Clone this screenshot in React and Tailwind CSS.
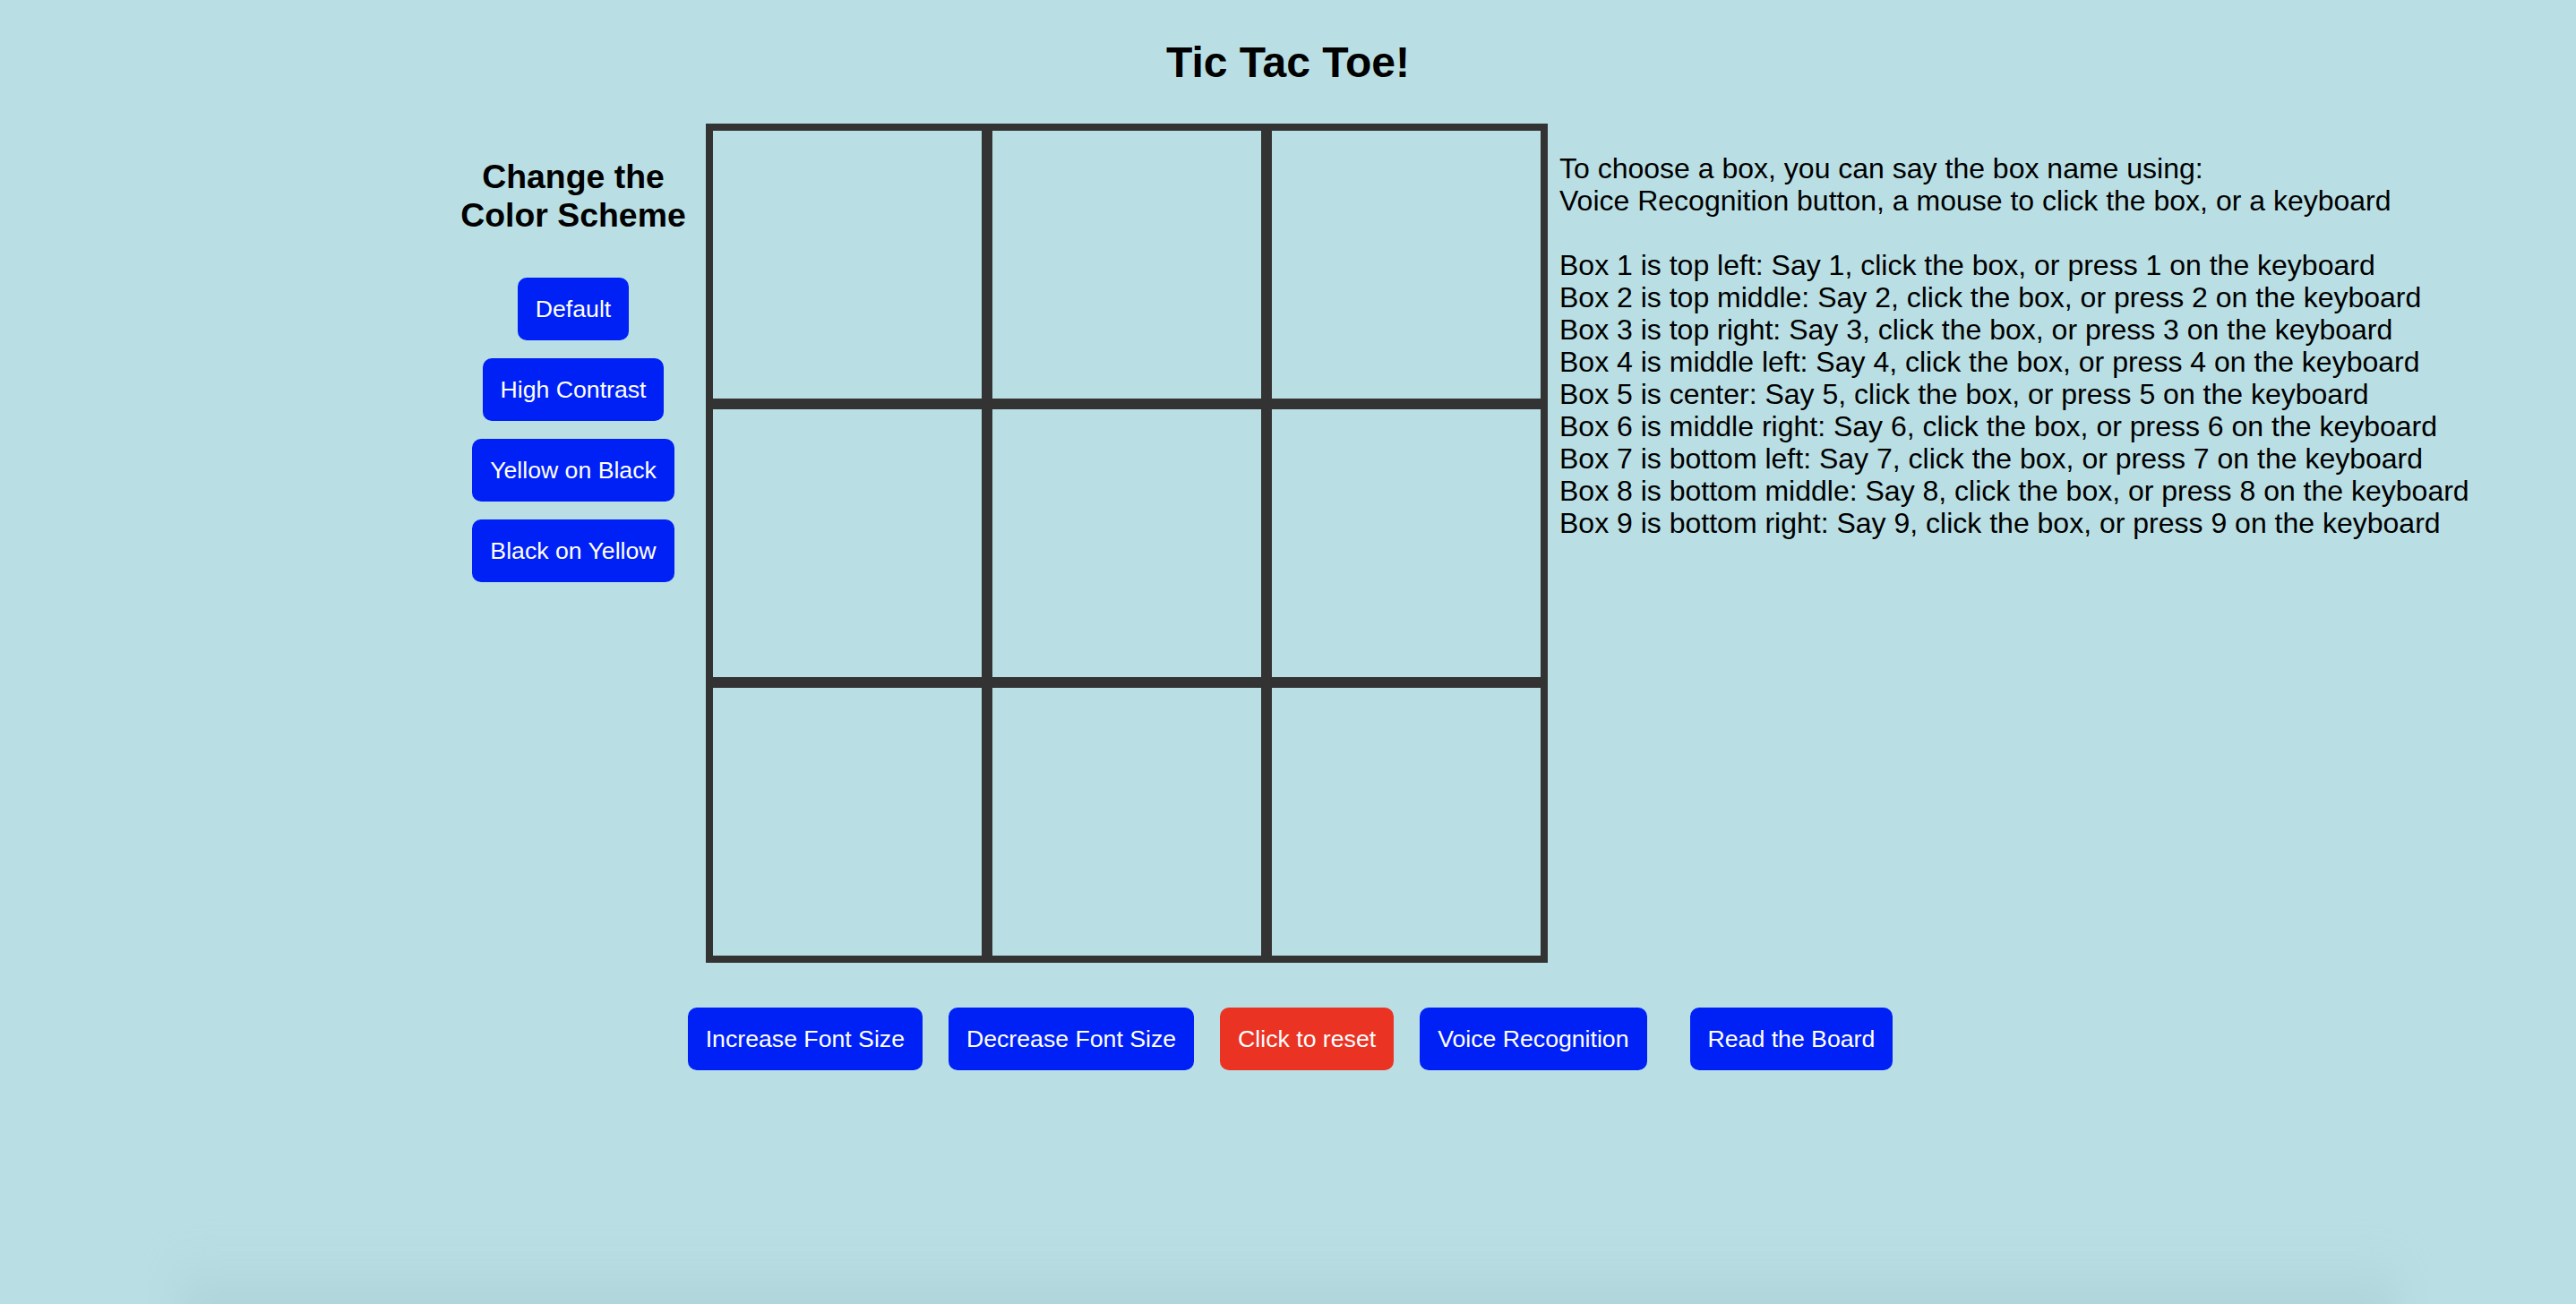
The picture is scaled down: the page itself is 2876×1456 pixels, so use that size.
import React from 'react';

const schemes = ['Default', 'High Contrast', 'Yellow on Black', 'Black on Yellow'];

const instructions = [
  'Box 1 is top left: Say 1, click the box, or press 1 on the keyboard',
  'Box 2 is top middle: Say 2, click the box, or press 2 on the keyboard',
  'Box 3 is top right: Say 3, click the box, or press 3 on the keyboard',
  'Box 4 is middle left: Say 4, click the box, or press 4 on the keyboard',
  'Box 5 is center: Say 5, click the box, or press 5 on the keyboard',
  'Box 6 is middle right: Say 6, click the box, or press 6 on the keyboard',
  'Box 7 is bottom left: Say 7, click the box, or press 7 on the keyboard',
  'Box 8 is bottom middle: Say 8, click the box, or press 8 on the keyboard',
  'Box 9 is bottom right: Say 9, click the box, or press 9 on the keyboard',
];

const btn =
  'rounded-[10px] px-[20px] py-[20px] text-[26.67px] leading-[30px] text-white whitespace-nowrap';

export default function App() {
  return (
    <div className="relative h-screen overflow-hidden bg-[#b9dfe4] font-['Liberation_Sans',Arial,sans-serif] text-black">
      {/* Title */}
      <h1 className="pt-[42px] text-center text-[48px] font-bold leading-[1.15]">Tic Tac Toe!</h1>

      {/* Main row */}
      <div className="mt-[41px] flex items-start pl-[510px]">
        {/* Color scheme column */}
        <div className="flex w-[260px] flex-col items-center pt-[38px]">
          <h3 className="text-center text-[37.4px] font-bold leading-[43px]">Change the Color Scheme</h3>
          <div className="mt-[48px] flex flex-col items-center gap-[20px]">
            {schemes.map((s) => (
              <button key={s} className={`${btn} bg-[#0021f5]`}>
                {s}
              </button>
            ))}
          </div>
        </div>

        {/* Board */}
        <div className="ml-[18px] grid grid-cols-[300px_300px_300px] gap-[12px] bg-[#333333] p-[8px]">
          {Array.from({ length: 9 }).map((_, i) => (
            <div key={i} className="h-[299px] w-[300px] bg-[#b9dfe4]" />
          ))}
        </div>

        {/* Instructions */}
        <div className="ml-[13px] pt-[32px] text-[32px] leading-[36px]">
          <p>To choose a box, you can say the box name using:</p>
          <p>Voice Recognition button, a mouse to click the box, or a keyboard</p>
          <div className="h-[36px]" />
          {instructions.map((t) => (
            <p key={t}>{t}</p>
          ))}
        </div>
      </div>

      {/* Controls */}
      <div className="mt-[50px] flex justify-center gap-[29px] pl-[5px]">
        <button className={`${btn} bg-[#0021f5]`}>Increase Font Size</button>
        <button className={`${btn} bg-[#0021f5]`}>Decrease Font Size</button>
        <button className={`${btn} bg-[#ea3323]`}>Click to reset</button>
        <button className={`${btn} bg-[#0021f5]`}>Voice Recognition</button>
        <button className={`${btn} ml-[19px] bg-[#0021f5]`}>Read the Board</button>
      </div>

      {/* bottom shading */}
      <div className="pointer-events-none absolute bottom-[-40px] left-[200px] right-[200px] h-[100px] bg-linear-to-b from-transparent to-[#aacfd4] blur-[20px]" />
    </div>
  );
}
